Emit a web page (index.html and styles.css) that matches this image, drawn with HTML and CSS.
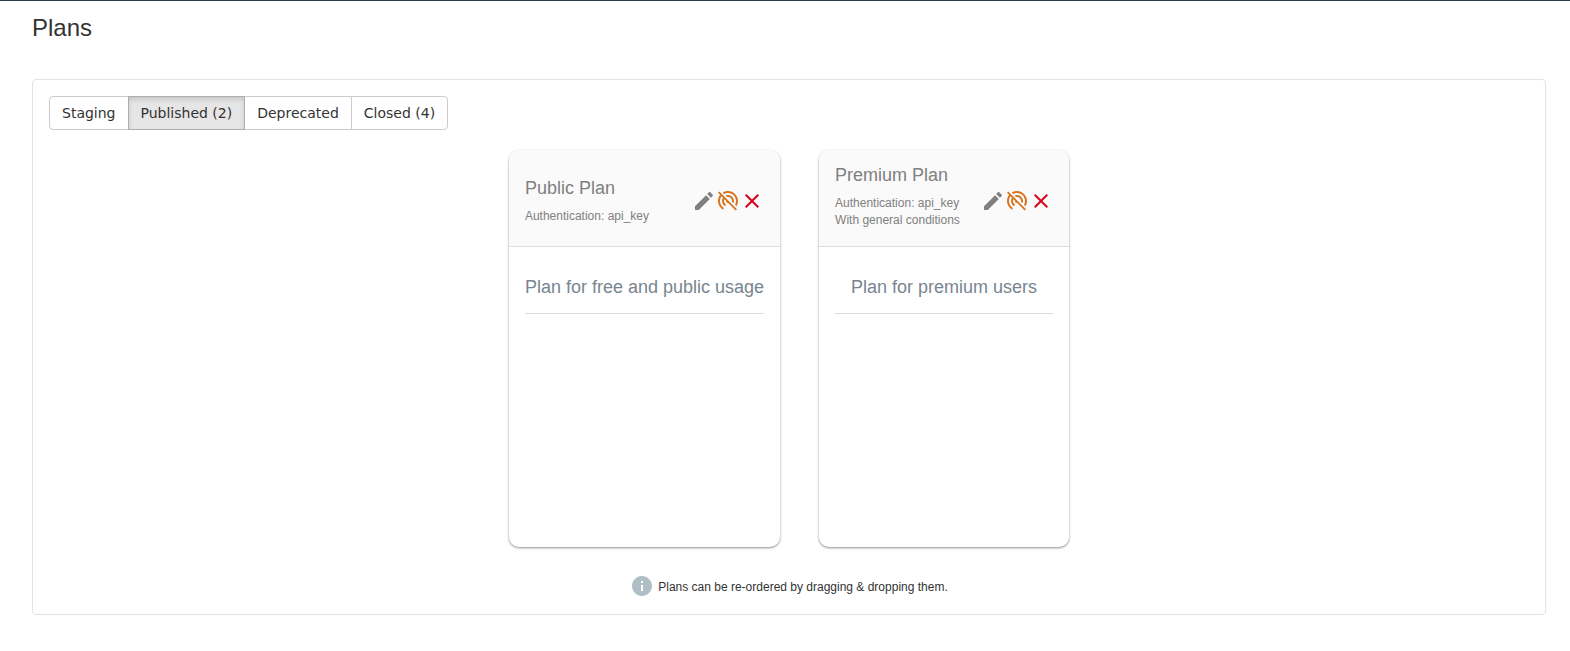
FILE: index.html
```html
<!DOCTYPE html>
<html lang="en">
<head>
<meta charset="utf-8">
<title>Plans</title>
<link rel="stylesheet" href="styles.css">
</head>
<body>
<svg class="sprite" aria-hidden="true">
  <symbol id="edit" viewBox="0 0 24 24"><path d="M3 17.25V21h3.75L17.81 9.94l-3.75-3.75L3 17.25zM20.71 7.04c.39-.39.39-1.02 0-1.41l-2.34-2.34c-.39-.39-1.02-.39-1.41 0l-1.83 1.83 3.75 3.75 1.83-1.83z"/></symbol>
  <symbol id="off" viewBox="0 0 24 24"><path d="M17.56 14.24c.28-.69.44-1.45.44-2.24 0-3.31-2.69-6-6-6-.79 0-1.55.16-2.24.44l1.62 1.62c.2-.03.41-.06.62-.06 2.21 0 4 1.79 4 4 0 .21-.02.42-.05.63l1.61 1.61zM12 4c4.42 0 8 3.58 8 8 0 1.35-.35 2.62-.95 3.74l1.47 1.47C21.46 15.69 22 13.91 22 12c0-5.52-4.48-10-10-10-1.91 0-3.69.55-5.21 1.47l1.46 1.46C9.37 4.34 10.65 4 12 4zM3.27 2.5L2 3.77l2.1 2.1C2.79 7.57 2 9.69 2 12c0 3.7 2.01 6.92 4.99 8.65l1-1.73C5.61 17.53 4 14.96 4 12c0-1.76.57-3.38 1.53-4.69l1.43 1.44C6.36 9.68 6 10.8 6 12c0 2.22 1.21 4.15 3 5.19l1-1.74c-1.19-.7-2-1.97-2-3.45 0-.65.17-1.25.44-1.79l1.58 1.58L10 12c0 1.1.9 2 2 2l.21-.01.01.01 7.51 7.51L21 20.23 4.27 3.5l-1-1z"/></symbol>
  <symbol id="close" viewBox="0 0 24 24"><path d="M19 6.41L17.59 5 12 10.59 6.41 5 5 6.41 10.59 12 5 17.59 6.41 19 12 13.41 17.59 19 19 17.59 13.41 12z"/></symbol>
  <symbol id="info" viewBox="0 0 24 24"><path d="M12 2C6.48 2 2 6.48 2 12s4.480 10 10 10 10-4.480 10-10S17.520 2 12 2zm1 15h-2v-6h2v6zm0-8h-2V7h2v2z"/></symbol>
</svg>
<main class="page">
  <h1 class="page-title">Plans</h1>
  <section class="panel">
    <div class="filters">
      <button class="filter" type="button">Staging</button>
      <button class="filter active" type="button" aria-pressed="true">Published (2)</button>
      <button class="filter" type="button">Deprecated</button>
      <button class="filter" type="button">Closed (4)</button>
    </div>
    <div class="plans">
      <article class="plan">
        <header class="plan-header">
          <div class="plan-info">
            <h2 class="plan-name">Public Plan</h2>
            <p class="plan-meta">Authentication: api_key</p>
          </div>
          <div class="actions">
            <button class="action" type="button" aria-label="Edit"><svg class="icon"><use href="#edit"/></svg></button>
            <button class="action deprecate" type="button" aria-label="Deprecate"><svg class="icon"><use href="#off"/></svg></button>
            <button class="action remove" type="button" aria-label="Close"><svg class="icon"><use href="#close"/></svg></button>
          </div>
        </header>
        <div class="plan-body"><p class="description">Plan for free and public usage</p></div>
      </article>
      <article class="plan">
        <header class="plan-header">
          <div class="plan-info has-conditions">
            <h2 class="plan-name">Premium Plan</h2>
            <p class="plan-meta">Authentication: api_key</p>
            <p class="plan-meta">With general conditions</p>
          </div>
          <div class="actions">
            <button class="action" type="button" aria-label="Edit"><svg class="icon"><use href="#edit"/></svg></button>
            <button class="action deprecate" type="button" aria-label="Deprecate"><svg class="icon"><use href="#off"/></svg></button>
            <button class="action remove" type="button" aria-label="Close"><svg class="icon"><use href="#close"/></svg></button>
          </div>
        </header>
        <div class="plan-body"><p class="description">Plan for premium users</p></div>
      </article>
    </div>
    <p class="hint"><svg class="icon hint-icon"><use href="#info"/></svg><span class="hint-text">Plans can be re-ordered by dragging &amp; dropping them.</span></p>
  </section>
</main>
</body>
</html>
```
FILE: styles.css
```css
* { box-sizing: border-box; }
body {
  margin: 0;
  border-top: 1px solid #263f4d;
  background: #fff;
  color: #333;
  font-family: "Liberation Sans", Arial, sans-serif;
}
h1, h2, p { margin: 0; font-weight: 400; }
.sprite { display: none; }
.page { padding: 12px 24px 32px 32px; }
.page-title { font-size: 24px; line-height: 30px; }
.panel {
  margin-top: 36px;
  padding: 16px 16px 14px;
  border: 1px solid #e1e4e7;
  border-radius: 4px;
}
.filters { display: flex; }
.filter {
  padding: 6px 12px;
  border: 1px solid #ccc;
  background: #fff;
  color: #333;
  font: 14px/20px "DejaVu Sans", sans-serif;
}
.filter + .filter { margin-left: -1px; }
.filter:first-child { border-radius: 4px 0 0 4px; }
.filter:last-child { border-radius: 0 4px 4px 0; }
.filter.active {
  z-index: 1;
  border-color: #adadad;
  background: #e6e6e6;
  box-shadow: inset 0 3px 5px rgba(0, 0, 0, .125);
}
.plans {
  display: flex;
  justify-content: center;
  gap: 39px;
  margin-top: 20px;
}
.plan {
  min-width: 250px;
  min-height: 397px;
  border-radius: 10px;
  overflow: hidden;
  box-shadow: 0 1px 3px rgba(0, 0, 0, .22), 0 1px 2px rgba(0, 0, 0, .26);
}
.plan-header {
  display: flex;
  align-items: center;
  justify-content: space-between;
  height: 97px;
  padding: 0 16px;
  border-bottom: 1px solid #ddd;
  background: #fafafa;
  color: #808080;
}
.plan-info { padding-top: 6px; }
.plan-info.has-conditions { padding: 0 0 3px; }
.plan-name { margin-bottom: 9px; font-size: 18px; line-height: 22px; }
.plan-meta { font-size: 12px; line-height: 17px; }
.actions { display: flex; padding-top: 6px; }
.action {
  display: flex;
  padding: 0;
  border: 0;
  background: none;
  color: #808080;
}
.deprecate { color: #d87523; }
.remove { color: #d9021b; }
.icon { width: 24px; height: 24px; fill: currentColor; }
.plan-body { padding: 24px 16px; }
.description {
  padding: 4px 0 14px;
  border-bottom: 1px solid #ddd;
  color: #788590;
  font-size: 18px;
  line-height: 24px;
  text-align: center;
}
.hint {
  display: flex;
  align-items: flex-start;
  justify-content: center;
  gap: 4px;
  margin-top: 27px;
  font-size: 12px;
  line-height: 26px;
}
.hint-icon { color: #b0bec5; }
```
